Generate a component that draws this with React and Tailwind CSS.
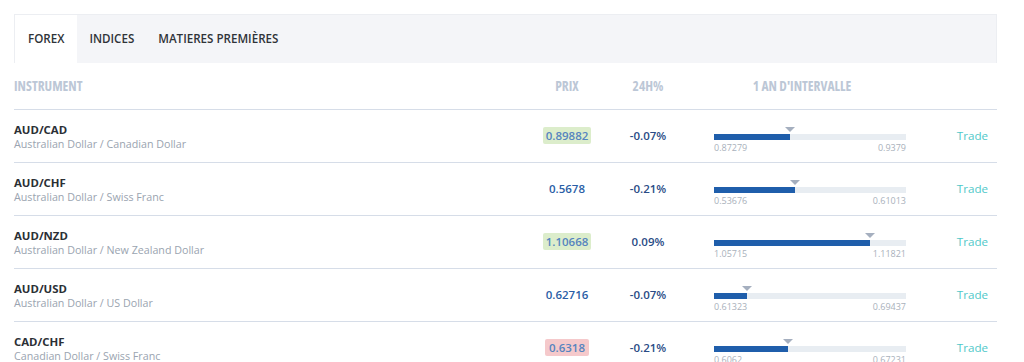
import React from "react";

const rows = [
  { sym: "AUD/CAD", name: "Australian Dollar / Canadian Dollar", price: "0.89882", flash: "up", chg: "-0.07%", pct: 39.6, lo: "0.87279", hi: "0.9379" },
  { sym: "AUD/CHF", name: "Australian Dollar / Swiss Franc", price: "0.5678", flash: null, chg: "-0.21%", pct: 42, lo: "0.53676", hi: "0.61013" },
  { sym: "AUD/NZD", name: "Australian Dollar / New Zealand Dollar", price: "1.10668", flash: "up", chg: "0.09%", pct: 81, lo: "1.05715", hi: "1.11821" },
  { sym: "AUD/USD", name: "Australian Dollar / US Dollar", price: "0.62716", flash: null, chg: "-0.07%", pct: 17, lo: "0.61323", hi: "0.69437" },
  { sym: "CAD/CHF", name: "Canadian Dollar / Swiss Franc", price: "0.6318", flash: "down", chg: "-0.21%", pct: 38.5, lo: "0.6062", hi: "0.67231" },
];

function Price({ r }) {
  if (r.flash === "up")
    return <span className="rounded-[2px] bg-[#dcedcb] px-[3px] py-[1px] font-semibold text-[#5584bf]">{r.price}</span>;
  if (r.flash === "down")
    return <span className="rounded-[2px] bg-[#f5c9cb] px-[4px] py-[1px] font-semibold text-[#5584bf]">{r.price}</span>;
  return <span className="font-semibold text-[#2a5ea6]">{r.price}</span>;
}

export default function App() {
  const font = { fontFamily: '"Open Sans", "Liberation Sans", sans-serif' };
  return (
    <div className="h-[362px] w-[1024px] overflow-hidden bg-white pt-[14px] pl-[14px]" style={font}>
      <div className="w-[983px]">
        <div className="flex h-[49px] border-t border-r border-[#eceef2] bg-[#f4f5f8] text-[11.6px] font-semibold text-[#2f3338]">
          <div className="flex items-center border-l border-[#eceef2] bg-white px-[13px]">FOREX</div>
          <div className="flex items-center px-[12px]">INDICES</div>
          <div className="flex items-center px-[12px]">MATIERES PREMIÈRES</div>
        </div>
        <div className="grid h-[47px] grid-cols-[506px_94px_68px_240px_75px] items-center border-b border-[#d6dde8] text-[13.5px] font-bold text-[#bcc7d6] font-stretch-condensed">
          <div>INSTRUMENT</div>
          <div className="text-center">PRIX</div>
          <div className="text-center">24H%</div>
          <div className="text-center">1 AN D'INTERVALLE</div>
          <div></div>
        </div>
        {rows.map((r) => (
          <div key={r.sym} className="grid h-[53px] grid-cols-[506px_94px_68px_240px_75px] items-center border-b border-[#d6dde8]">
            <div className="flex flex-col pt-[1px] leading-[14px]">
              <span className="text-[11.4px] font-bold text-[#2b2f35]">{r.sym}</span>
              <span className="text-[10.7px] text-[#9aa4b0]">{r.name}</span>
            </div>
            <div className="text-center text-[11.5px]"><Price r={r} /></div>
            <div className="text-center text-[11.5px] font-semibold text-[#2a4c86]">{r.chg}</div>
            <div className="pl-[32px] pt-[16px]">
              <div className="relative h-[6px] w-[192px] bg-[#e8edf2]">
                <div className="h-full bg-[#1f5eab]" style={{ width: `${r.pct}%` }} />
                <svg className="absolute top-[-7px] -ml-[5px]" style={{ left: `${r.pct}%` }} width="10" height="5" viewBox="0 0 10 5">
                  <path d="M0 0 H10 L5 5 Z" fill="#a5afbf" />
                </svg>
              </div>
              <div className="mt-[1px] flex w-[192px] justify-between text-[9px] leading-[13px] text-[#a9b1bb]">
                <span>{r.lo}</span>
                <span>{r.hi}</span>
              </div>
            </div>
            <div className="pr-[9px] text-right text-[11.6px] text-[#4fc8c9]">Trade</div>
          </div>
        ))}
      </div>
    </div>
  );
}
